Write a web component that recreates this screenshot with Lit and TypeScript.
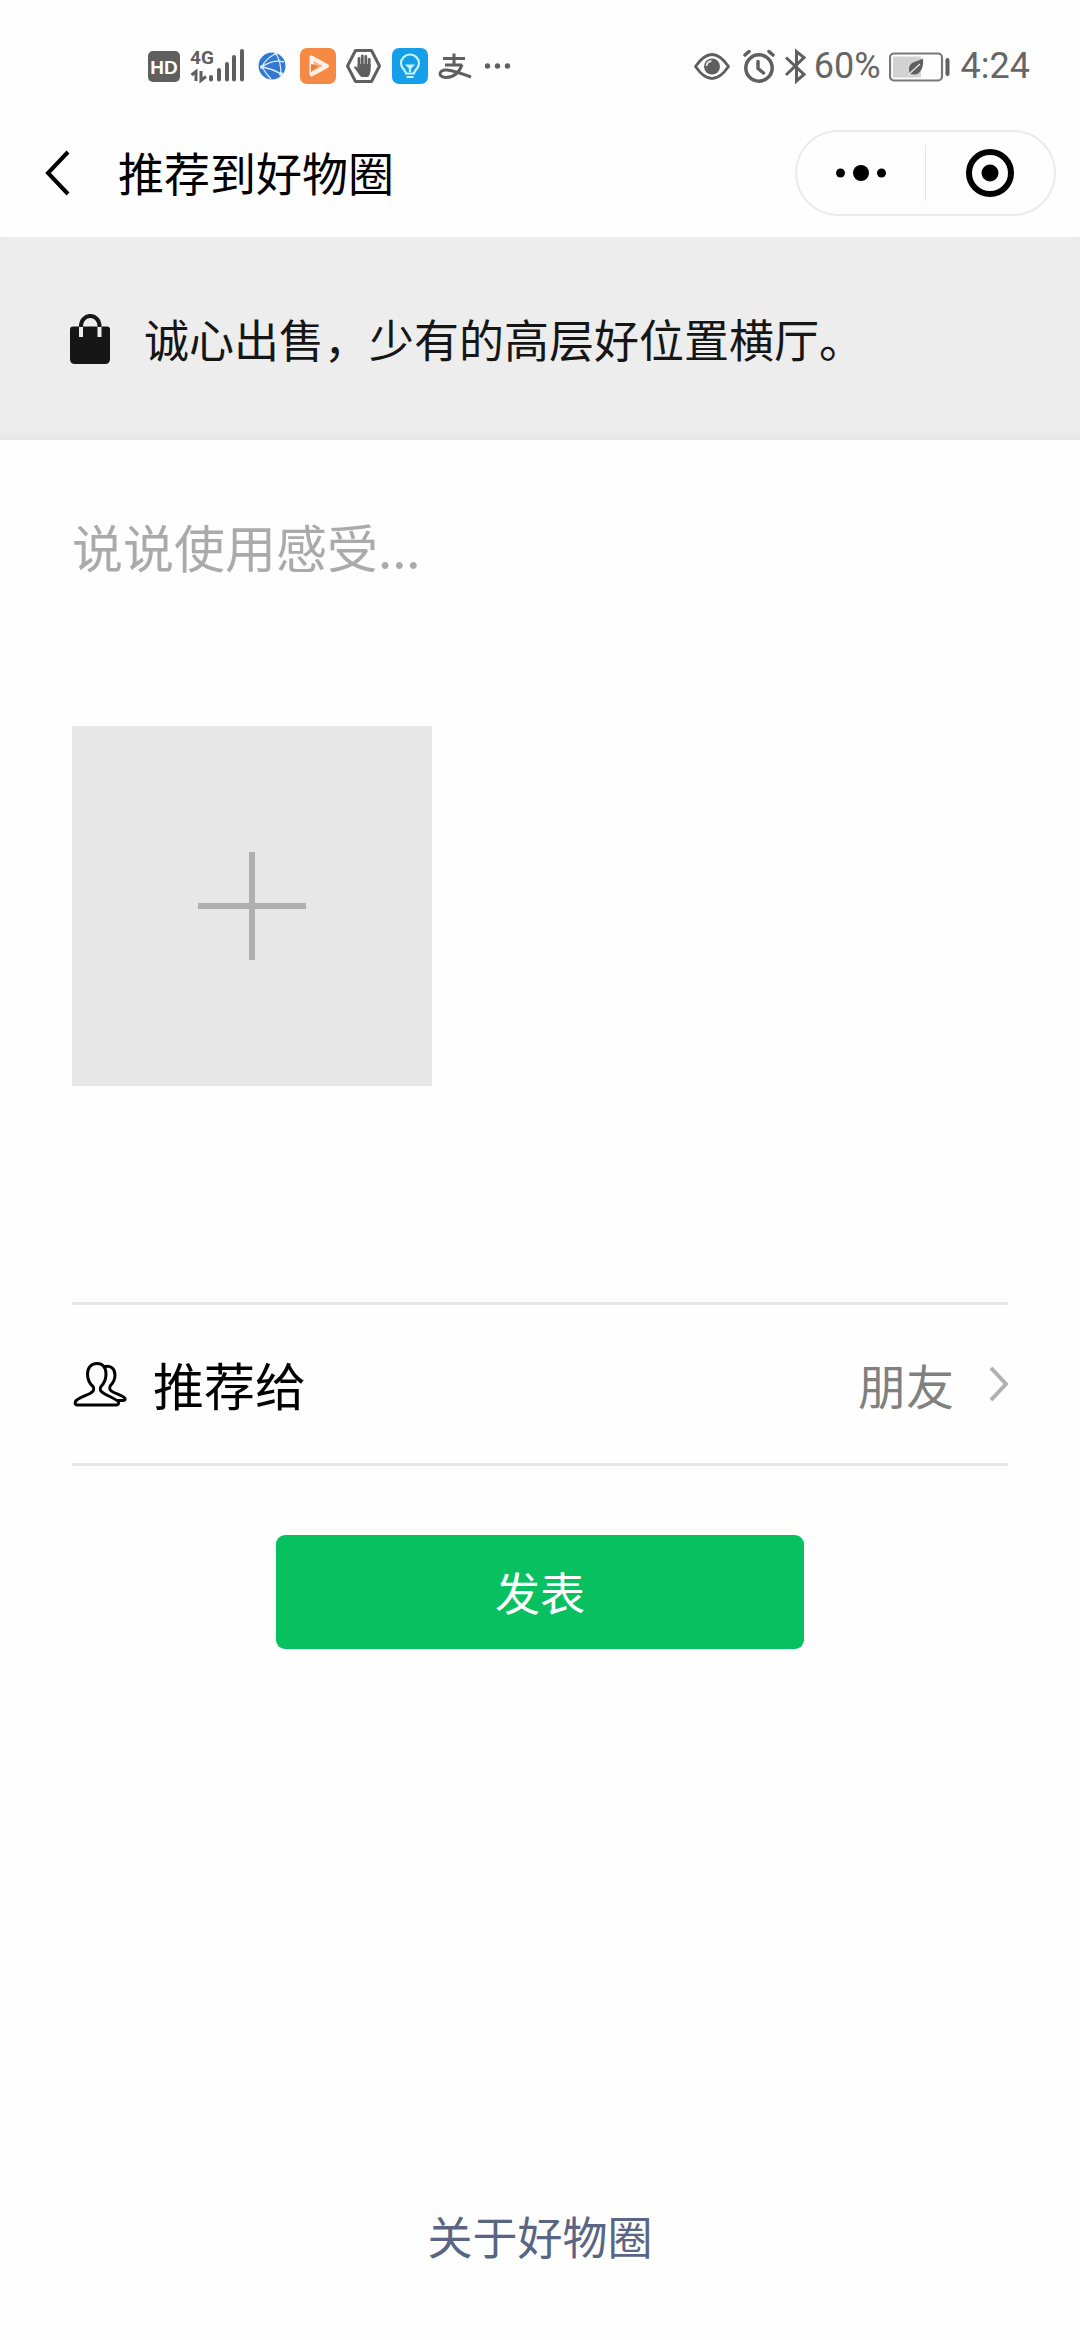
import { LitElement, html, css, svg } from "lit";
import { customElement, state } from "lit/decorators.js";

const GREY = "#5f5f5f";

/* Signal strength bars: centre x and top y; all stand on the same base line. */
const SIGNAL_BARS = [
  [21, 31],
  [29, 24],
  [37, 18],
  [44, 11],
  [52, 5],
];

@customElement("status-bar")
export class StatusBar extends LitElement {
  static styles = css`
    :host {
      display: flex;
      justify-content: space-between;
      align-items: center;
      height: 40px;
      padding: 46px 50px 0 148px;
      color: #666;
      font: 36px/40px Roboto, "Noto Sans", sans-serif;
    }
    .group {
      display: flex;
      align-items: center;
      gap: 10px;
    }
    .group.tight {
      gap: 8px;
    }
    svg {
      display: block;
      height: 40px;
      flex: none;
    }
  `;

  render() {
    return html`
      <div class="group">
        <svg width="32" viewBox="0 0 32 40" aria-hidden="true">
          <rect x="0" y="5" width="32" height="31" rx="5" fill=${GREY} />
          <text x="16" y="27.500" text-anchor="middle" fill="#fff" font-family="Liberation Sans, sans-serif" font-weight="700" font-size="19">HD</text>
        </svg>
        <svg width="56" viewBox="0 0 56 40" aria-hidden="true">
          <text x="0" y="17.500" fill=${GREY} font-family="Liberation Sans Narrow, Roboto, sans-serif" font-weight="700" font-size="19">4G</text>
          <path d="M1.500 29L6 25.500V35M11 25V34.500L16 30.500" fill="none" stroke=${GREY} stroke-width="3" />
          ${SIGNAL_BARS.map(([x, top]) => svg`<path d="M${x} ${top}V33.500" stroke=${GREY} stroke-width="4" stroke-linecap="round" />`)}
        </svg>
        <svg width="34" viewBox="0 0 34 40" aria-hidden="true">
          <circle cx="16" cy="20" r="13.500" fill="#3379cf" />
          <path d="M20 7.500Q9 13 6 21Q17 23 25 28Q25 16 20 7.500M6 21Q17 13 28 16M6 21Q10 28 15 33" fill="none" stroke="#d9ecff" stroke-width="1.300" />
          <circle cx="20" cy="7.500" r="1.800" fill="#d9ecff" />
          <circle cx="6" cy="21" r="2" fill="#d9ecff" />
          <circle cx="25" cy="28" r="2" fill="#d9ecff" />
        </svg>
        <svg width="36" viewBox="0 0 36 40" aria-hidden="true">
          <rect x="0" y="2" width="36" height="36" rx="7" fill="#f68a45" />
          <path d="M11.500 11.500L27 20L11.500 28.500Z" fill="#f9b78d" stroke="#fff1e6" stroke-width="4" stroke-linejoin="round" />
          <path d="M11 18L19 20L11 26Z" fill="#ee7c38" />
        </svg>
        <svg width="36" viewBox="0 0 36 40" aria-hidden="true">
          <path d="M9.500 4.500H25.500L33.500 20L25.500 35.500H9.500L1.500 20Z" fill="none" stroke=${GREY} stroke-width="3" stroke-linejoin="round" />
          <path d="M13 22V12.500M16.300 20V10M19.800 20V10.500M23.200 21V13.500" stroke=${GREY} stroke-width="2.800" stroke-linecap="round" />
          <path d="M11.600 18H24.600V25Q24 29 22 31H15.500Q13 29 11 25.500L8 21.500Q9 19 11.600 22Z" fill=${GREY} />
        </svg>
        <svg width="36" viewBox="0 0 36 40" aria-hidden="true">
          <rect x="0" y="2" width="36" height="36" rx="7" fill="#159fe8" />
          <path d="M14 27.500C14 24 9 22.500 9 17.500A9 9 0 0 1 27 17.500C27 22.500 22 24 22 27.500Z" fill="none" stroke="#c9f5ff" stroke-width="2.200" />
          <path d="M14.500 31H21.500M18 26V20M15.500 19.500H20.500L18 22Z" fill="#c9f5ff" stroke="#c9f5ff" stroke-width="2.200" />
        </svg>
        <svg width="34" viewBox="0 0 34 40" aria-hidden="true">
          <g fill="none" stroke=${GREY} stroke-width="3">
            <path d="M5 12.500H27M16 7.500V19M7 19H24" />
            <path d="M24 18.500Q20 31 8 31.500Q2 31 2 27.500Q3 23.500 9 24Q17 25 33 31" />
          </g>
        </svg>
        <svg width="32" viewBox="0 0 32 40" aria-hidden="true">
          <g fill=${GREY}>
            <circle cx="5.500" cy="20" r="2.700" />
            <circle cx="15.500" cy="20" r="2.700" />
            <circle cx="25.500" cy="20" r="2.700" />
          </g>
        </svg>
      </div>
      <div class="group tight">
        <svg width="40" viewBox="0 0 40 40" aria-hidden="true">
          <path d="M1.500 20.500Q18 -3.500 34.500 20.500Q18 44.500 1.500 20.500Z" fill="none" stroke=${GREY} stroke-width="2.800" stroke-linejoin="round" />
          <circle cx="18" cy="20.500" r="8" fill=${GREY} />
          <path d="M12.500 20A5.500 5.500 0 0 1 17.500 15" fill="none" stroke="#ddd" stroke-width="2" />
        </svg>
        <svg width="34" viewBox="0 0 34 40" aria-hidden="true">
          <g fill="none" stroke=${GREY} stroke-linecap="round">
            <circle cx="17" cy="22" r="13.200" stroke-width="3.500" />
            <path d="M16 15.500V22.500L21.500 27" stroke-width="3.500" stroke-linejoin="round" />
            <path d="M3 9L7 5.500M31 9L27 5.500" stroke-width="3.500" />
          </g>
        </svg>
        <svg width="22" viewBox="0 0 22 40" aria-hidden="true">
          <path d="M2 11.500L20 28.500L12.500 35V5.500L20 11.500L2 29" fill="none" stroke=${GREY} stroke-width="3" />
        </svg>
        <span>60%</span>
        <svg width="64" viewBox="0 0 64 40" aria-hidden="true">
          <rect x="1" y="7.500" width="52" height="27" rx="4" fill="none" stroke="#777" stroke-width="2.200" />
          <rect x="4" y="10.500" width="28" height="21" fill="#d2d2d2" />
          <path d="M34 12.500Q35 22 30 27Q25 30 20.500 27Q18 19 25 16Q30 14.500 34 12.500Z" fill=${GREY} />
          <path d="M19 29L31 18" stroke="#e8e8e8" stroke-width="1.200" />
          <path d="M58.500 14V28" stroke=${GREY} stroke-width="4" stroke-linecap="round" />
        </svg>
        <span>4:24</span>
      </div>
    `;
  }
}

@customElement("app-root")
export class AppRoot extends LitElement {
  static styles = css`
    :host {
      display: flex;
      flex-direction: column;
      min-height: 100vh;
      background: #fefefe;
      color: #000;
      font: 45px/64px "Noto Sans CJK SC", sans-serif;
    }
    button,
    textarea {
      margin: 0;
      padding: 0;
      border: 0;
      background: none;
      color: inherit;
      font: inherit;
    }
    svg {
      display: block;
      flex: none;
    }
    .nav {
      display: flex;
      align-items: center;
      padding: 44px 24px 21px 44px;
    }
    .title {
      flex: 1;
      margin: 0 0 0 46px;
      padding-bottom: 4px;
      font-size: 46px;
      font-weight: 400;
    }
    .capsule {
      box-sizing: border-box;
      display: flex;
      align-items: center;
      width: 261px;
      height: 86px;
      border: 2px solid #ebebeb;
      border-radius: 43px;
    }
    .capsule button {
      flex: 1;
      display: flex;
      justify-content: center;
    }
    .divider {
      width: 1px;
      height: 56px;
      background: #e4e4e4;
    }
    .banner {
      display: flex;
      align-items: center;
      gap: 32px;
      padding: 70px 68px 69px;
      background: #ededed;
      color: #161616;
      box-shadow: inset 0 -6px 4px -2px #e7e7e7;
    }
    .banner p {
      margin: 0;
    }
    .form {
      display: flex;
      flex-direction: column;
      padding: 74px 72px 0;
    }
    .feeling {
      width: 100%;
      height: 160px;
      resize: none;
      outline: 0;
      font-size: 51px;
    }
    .feeling::placeholder {
      color: #aaa;
      opacity: 1;
    }
    .upload {
      display: grid;
      place-items: center;
      width: 360px;
      height: 360px;
      margin-top: 52px;
      background: #e7e7e7;
    }
    .audience {
      display: flex;
      align-items: center;
      margin-top: 216px;
      padding: 47px 0;
      border: solid #e6e6e6;
      border-width: 3px 0;
      text-align: left;
    }
    .audience .label {
      flex: 1;
      margin-left: 25px;
      font-size: 51px;
    }
    .audience .value {
      margin-right: 34px;
      color: #808080;
      font-size: 48px;
    }
    .publish {
      align-self: center;
      width: 528px;
      margin-top: 69px;
      padding: 25px 0;
      border-radius: 9px;
      background: #07c160;
      color: #fff;
    }
    .about {
      margin: auto auto 72px;
      color: #596582;
      text-decoration: none;
    }
  `;

  @state() private feeling = "";

  private onInput(e: Event) {
    this.feeling = (e.target as HTMLTextAreaElement).value;
  }

  render() {
    return html`
      <status-bar></status-bar>
      <header class="nav">
        <button aria-label="返回">
          <svg width="28" height="48" viewBox="0 0 28 48">
            <path d="M24 3L4 24L24 45" fill="none" stroke="#000" stroke-width="4" />
          </svg>
        </button>
        <h1 class="title">推荐到好物圈</h1>
        <div class="capsule">
          <button aria-label="更多">
            <svg width="52" height="20" viewBox="0 0 52 20">
              <circle cx="5.500" cy="10" r="4.500" />
              <circle cx="26" cy="10" r="8" />
              <circle cx="46.500" cy="10" r="4.500" />
            </svg>
          </button>
          <span class="divider"></span>
          <button aria-label="关闭">
            <svg width="48" height="48" viewBox="0 0 48 48">
              <circle cx="24" cy="24" r="21" fill="none" stroke="#000" stroke-width="6" />
              <circle cx="24" cy="24" r="8.500" />
            </svg>
          </button>
        </div>
      </header>
      <section class="banner">
        <svg width="44" height="50" viewBox="0 0 44 50" aria-hidden="true">
          <path d="M5 12.500H39Q42 12.500 42 15.500V45Q42 50 37 50H7Q2 50 2 45V15.500Q2 12.500 5 12.500Z" fill="#161616" />
          <path d="M13 12V23M31.500 12V23" stroke="#ededed" stroke-width="4" />
          <path d="M13 13V12A9.200 10 0 0 1 31.500 12V13" fill="none" stroke="#161616" stroke-width="4" />
        </svg>
        <p>诚心出售，少有的高层好位置横厅。</p>
      </section>
      <main class="form">
        <textarea
          class="feeling"
          aria-label="使用感受"
          placeholder="说说使用感受..."
          .value=${this.feeling}
          @input=${this.onInput}
        ></textarea>
        <button class="upload" aria-label="添加图片">
          <svg width="108" height="108" viewBox="0 0 108 108">
            <path d="M54 0V108M0 54H108" stroke="#b0b0b0" stroke-width="6" />
          </svg>
        </button>
        <button class="audience">
          <svg width="56" height="48" viewBox="0 0 56 48" aria-hidden="true">
            <g fill="none" stroke="#000" stroke-width="3" stroke-linejoin="round" stroke-linecap="round">
              <path d="M25 3.500C19.500 3.500 15.500 7.500 15.500 14C15.500 19 17.500 23.500 21 26.500C23 30 21.500 31.500 18 33.500C12 36.500 5 38.500 3.500 41.500Q2.500 45 5 45H44Q47 45 46.500 42C44.500 39 38 37 32 33.500C28.500 31.500 27 30 29 26.500C32 23.500 34 19 34 14C34 7.500 30.500 3.500 25 3.500Z" />
              <path d="M32 7C38 4.500 43 8.500 43 15C43 20 41 23 38.500 25.500C36.500 28.500 38 30.500 41 32C46 34.500 52 36 53 38.500Q53.500 40.500 51 40.500H46" />
            </g>
          </svg>
          <span class="label">推荐给</span>
          <span class="value">朋友</span>
          <svg width="20" height="36" viewBox="0 0 20 36" aria-hidden="true">
            <path d="M3 2L18 18L3 34" fill="none" stroke="#b0b0b0" stroke-width="4" />
          </svg>
        </button>
        <button class="publish">发表</button>
      </main>
      <a class="about" href="#about">关于好物圈</a>
    `;
  }
}
